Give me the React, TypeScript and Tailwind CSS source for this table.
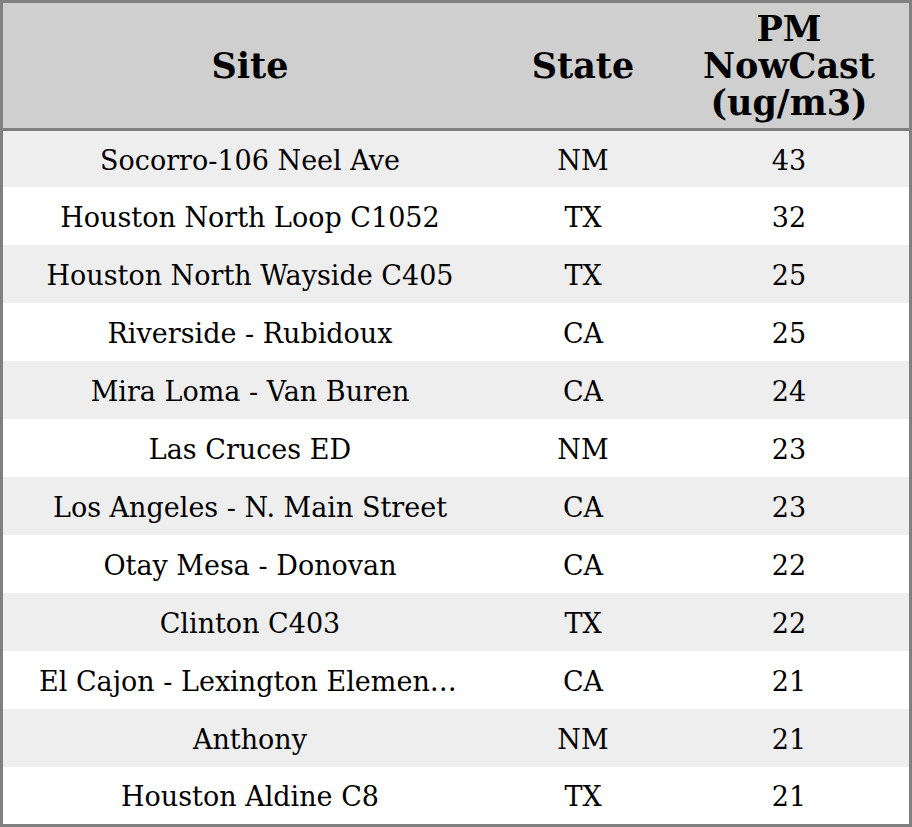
const rows: [string, string, number][] = [
  ['Socorro-106 Neel Ave', 'NM', 43],
  ['Houston North Loop C1052', 'TX', 32],
  ['Houston North Wayside C405', 'TX', 25],
  ['Riverside - Rubidoux', 'CA', 25],
  ['Mira Loma - Van Buren', 'CA', 24],
  ['Las Cruces ED', 'NM', 23],
  ['Los Angeles - N. Main Street', 'CA', 23],
  ['Otay Mesa - Donovan', 'CA', 22],
  ['Clinton C403', 'TX', 22],
  ['El Cajon - Lexington Elementary School', 'CA', 21],
  ['Anthony', 'NM', 21],
  ['Houston Aldine C8', 'TX', 21],
]

export default function App() {
  return (
    <div
      className="w-[912px] h-[827px] border-[3px] border-[#808080] bg-white text-black flex flex-col"
      style={{ fontFamily: '"DejaVu Serif", "Liberation Serif", serif' }}
    >
      {/* Header */}
      <div className="grid grid-cols-[494px_172px_240px] h-[128px] shrink-0 bg-[#cfcfcf] border-b-[3px] border-[#808080] text-[35px] font-bold leading-[37px]">
        <div className="flex items-center justify-center">Site</div>
        <div className="flex items-center justify-center">State</div>
        <div className="flex items-center justify-center text-center">
          PM
          <br />
          NowCast
          <br />
          (ug/m3)
        </div>
      </div>

      {/* Body */}
      <div className="flex flex-col flex-1 text-[27px]">
        {rows.map(([site, state, value], i) => (
          <div
            key={site}
            className={
              'grid grid-cols-[494px_172px_240px] items-center pt-[4px] ' +
              (i === 0 ? 'h-[56px] ' : i === rows.length - 1 ? 'h-[57px] ' : 'h-[58px] ') +
              (i % 2 === 0 ? 'bg-[#eeeeee]' : 'bg-white')
            }
          >
            <div className="px-[36px] text-center truncate">{site}</div>
            <div className="text-center">{state}</div>
            <div className="text-center">{value}</div>
          </div>
        ))}
      </div>
    </div>
  )
}
